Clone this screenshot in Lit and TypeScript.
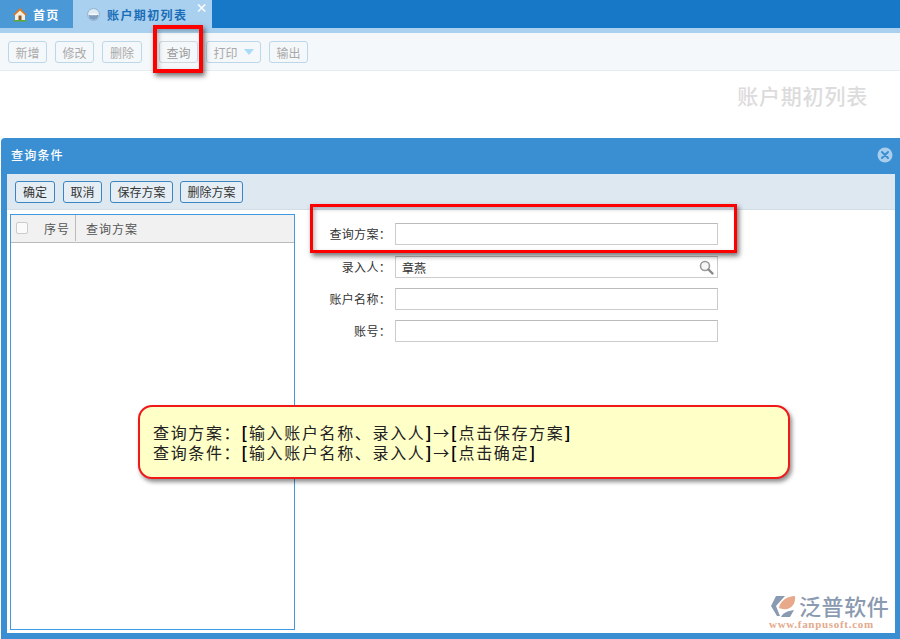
import { LitElement, html, css } from "lit";
import { customElement } from "lit/decorators.js";

@customElement("app-root")
export class AppRoot extends LitElement {
  static styles = css`
    :host { display: block; width: 900px; height: 639px; position: relative; overflow: hidden; background: #fff; font-family: "Noto Sans CJK SC", "Liberation Sans", sans-serif; font-size: 12px; color: #333; }
    .tabbar { display: flex; height: 28px; background: #1878c8; border-bottom: 5px solid #a9d0ee; }
    .tab { display: flex; align-items: center; box-sizing: border-box; font-weight: 700; font-size: 12px; }
    .home { width: 73px; background: #4a98d6; color: #fff; padding-left: 12px; gap: 5px; height: 28px; letter-spacing: 1.2px; }
    .active { width: 139px; height: 33px; background: #a9d0ee; color: #1a6db8; padding: 0 0 5px 14px; gap: 7px; position: relative; letter-spacing: 1.4px; }
    .x { position: absolute; right: 3px; top: 1px; color: #fff; font-size: 12px; line-height: 14px; font-weight: 700; }
    .toolbar { display: flex; align-items: center; height: 38px; box-sizing: border-box; background: #f4f8fb; border-bottom: 1px solid #e6ecf1; padding: 1px 0 0 8px; }
    .btn { box-sizing: border-box; height: 22px; border-radius: 3px; background: #f5f8fa; border: 1px solid #bdd7ea; color: #aaa; display: flex; align-items: center; justify-content: center; font-size: 12px; width: 39px; margin-right: 8px; }
    .btn.gap { margin-right: 17px; width: 40px; }
    .btn.print { width: 55px; gap: 6px; }
    .btn.q { border-color: #cfd8de; color: #999; }
    .caret { width: 0; height: 0; border: 5px solid transparent; border-top: 6px solid #a8dcf8; border-bottom: 0; }
    .title-row { height: 67px; box-sizing: border-box; display: flex; justify-content: flex-end; padding: 9px 32px 0 0; font-size: 21px; line-height: 30px; color: #dcdcdc; font-weight: 500; letter-spacing: .8px; }
    .dialog { margin-left: 1px; height: 501px; background: #3a8fd3; border-radius: 4px 0 0 0; display: flex; flex-direction: column; padding: 0 5px 6px 6px; box-sizing: border-box; }
    .dlg-head { height: 36px; flex: none; box-sizing: border-box; display: flex; align-items: center; justify-content: space-between; color: #fff; font-weight: 500; font-size: 12px; padding: 0 2px 3px 4px; letter-spacing: 1.2px; }
    .dlg-body { flex: 1; background: #fff; display: flex; flex-direction: column; min-height: 0; }
    .dlg-tools { height: 36px; flex: none; background: #dee8f1; display: flex; align-items: center; padding: 0 0 0 8px; gap: 8px; border-bottom: 1px solid #d3dde6; box-sizing: border-box; }
    .dbtn { box-sizing: border-box; height: 22px; border: 1px solid #3a86c4; border-radius: 3px; background: #e6eef5; color: #333; display: flex; align-items: center; justify-content: center; font-size: 12px; width: 40px; }
    .dbtn.narrow { width: 39px; }
    .dbtn.wide { width: 63px; }
    .dbtn.tight { margin-left: -1px; }
    .main { flex: 1; display: flex; min-height: 0; }
    .list { box-sizing: border-box; width: 285px; margin: 4px 1px 3px 3px; border: 1px solid #3f9ae0; background: #fff; }
    .list-head { height: 28px; box-sizing: border-box; background: #f1f1f1; border-bottom: 1px solid #bbb; display: flex; align-items: center; color: #555; font-size: 12px; letter-spacing: 1px; padding-bottom: 1px; }
    .cb { width: 12px; height: 12px; box-sizing: border-box; border: 1px solid #ccc; border-radius: 2px; background: #fafafa; margin-left: 5px; }
    .seq { width: 48px; height: 100%; display: flex; align-items: center; justify-content: flex-end; padding-right: 5px; box-sizing: border-box; border-right: 1px solid #bbb; }
    .plan { padding-left: 10px; }
    .form { display: grid; grid-template-columns: 95px 323px; column-gap: 4px; row-gap: 10px; margin: 13px 0 0 0; align-content: start; }
    .lbl { text-align: right; height: 22px; line-height: 22px; color: #333; font-size: 12px; letter-spacing: .3px; box-sizing: border-box; }
    .inp { box-sizing: border-box; height: 22px; border: 1px solid #ccc; border-top-color: #bbb; background: #fff; padding-left: 6px; display: flex; align-items: center; justify-content: space-between; font-size: 12px; color: #333; }
    .inp svg { margin-right: 3px; }
    .low { margin-top: 1px; }
    .red { position: absolute; box-sizing: border-box; border: 4px solid #f00; box-shadow: 2px 3px 5px rgba(0,0,0,.55), inset 2px 2px 4px rgba(0,0,0,.25); }
    .r1 { left: 153px; top: 25px; width: 50px; height: 48px; }
    .r2 { left: 310px; top: 204px; width: 427px; height: 49px; border-width: 3px; }
    .note { position: absolute; left: 138px; top: 405px; width: 652px; height: 74px; box-sizing: border-box; background: #ffffc8; border: 2px solid #f01818; border-radius: 14px; box-shadow: 2px 3px 4px rgba(0,0,0,.45); padding: 15px 0 0 13px; font-size: 16px; line-height: 20px; color: #222; letter-spacing: 1.65px; white-space: nowrap; }
    .note b { font-weight: 700; color: #000; }
    .logo { position: absolute; left: 770px; top: 592px; width: 122px; }
    .logo-top { display: flex; align-items: center; gap: 1px; color: #8a9ab0; font-size: 22px; line-height: 26px; letter-spacing: .6px; font-weight: 500; }
    .logo-url { font-family: "Liberation Serif", serif; font-size: 11px; line-height: 12px; font-weight: 700; color: #e4a98c; letter-spacing: .7px; margin-left: -1px; white-space: nowrap; }
  `;

  private homeIcon() {
    return html`<svg width="16" height="15" viewBox="0 0 16 15">
      <path d="M3 7v6h10V7L8 3z" fill="#f6efe0"/>
      <path d="M1 8l7-7 7 7-1.6.6L8 3.4 2.6 8.6z" fill="#e0781e"/>
      <rect x="6.5" y="8.5" width="3" height="4.5" fill="#8a5a2a"/>
      <rect x="1.5" y="13" width="13" height="1.6" fill="#5fa83c"/>
    </svg>`;
  }

  private renderBtn(t: string, cls = "") {
    return html`<div class="btn ${cls}">${t}</div>`;
  }

  render() {
    return html`
      <div class="tabbar">
        <div class="tab home">${this.homeIcon()}<span>首页</span></div>
        <div class="tab active">
          <svg width="13" height="13" viewBox="0 0 13 13">
            <circle cx="6.5" cy="6.5" r="6" fill="#dfe9f2" stroke="#8fb3d2"/>
            <path d="M1.5 7h10a5 5 0 0 1-10 0z" fill="#7f9fc0"/>
            <rect x="3" y="5.6" width="7" height="1.6" fill="#f7fbff"/>
          </svg>
          <span>账户期初列表</span>
          <span class="x">×</span>
        </div>
      </div>
      <div class="toolbar">
        ${this.renderBtn("新增")}${this.renderBtn("修改")}${this.renderBtn("删除", "gap")}
        ${this.renderBtn("查询", "q")}
        <div class="btn print"><span>打印</span><span class="caret"></span></div>
        ${this.renderBtn("输出")}
      </div>
      <div class="title-row">账户期初列表</div>
      <div class="dialog">
        <div class="dlg-head">
          <span>查询条件</span>
          <svg width="16" height="16" viewBox="0 0 16 16">
            <circle cx="8" cy="8" r="7.5" fill="#a9cdec"/>
            <path d="M5 5l6 6M11 5l-6 6" stroke="#3a8fd3" stroke-width="2" stroke-linecap="round"/>
          </svg>
        </div>
        <div class="dlg-body">
          <div class="dlg-tools">
            <div class="dbtn">确定</div>
            <div class="dbtn narrow">取消</div>
            <div class="dbtn wide">保存方案</div>
            <div class="dbtn wide tight">删除方案</div>
          </div>
          <div class="main">
            <div class="list">
              <div class="list-head">
                <div class="cb"></div>
                <div class="seq">序号</div>
                <div class="plan">查询方案</div>
              </div>
            </div>
            <div class="form">
              <div class="lbl">查询方案：</div><div class="inp"></div>
              <div class="lbl low">录入人：</div>
              <div class="inp low"><span>章燕</span>
                <svg width="15" height="15" viewBox="0 0 15 15">
                  <circle cx="6" cy="6" r="4.5" fill="#f4f6f7" stroke="#9a9a9a" stroke-width="1.6"/>
                  <path d="M9.5 9.5l4 4" stroke="#888" stroke-width="2.4" stroke-linecap="round"/>
                </svg>
              </div>
              <div class="lbl">账户名称：</div><div class="inp"></div>
              <div class="lbl">账号：</div><div class="inp"></div>
            </div>
          </div>
        </div>
      </div>
      <div class="red r1"></div>
      <div class="red r2"></div>
      <div class="note">
        <div>查询方案：<b>[</b>输入账户名称、录入人<b>]</b>→<b>[</b>点击保存方案<b>]</b></div>
        <div>查询条件：<b>[</b>输入账户名称、录入人<b>]</b>→<b>[</b>点击确定<b>]</b></div>
      </div>
      <div class="logo">
        <div class="logo-top">
          <svg width="28" height="26" viewBox="0 0 28 26">
            <path d="M6 4h9L6 14l4 10H7L1 14z" fill="#8a9ab0"/>
            <path d="M9 16C10 9 17 4 25 4c1 7-3 12-8 13-3 .5-6 0-8-1z" fill="#e8a98a"/>
            <path d="M11 25c2-4 6-6 13-7l-4 7z" fill="#8a9ab0"/>
          </svg>
          <span>泛普软件</span>
        </div>
        <div class="logo-url">www.fanpusoft.com</div>
      </div>
    `;
  }
}
